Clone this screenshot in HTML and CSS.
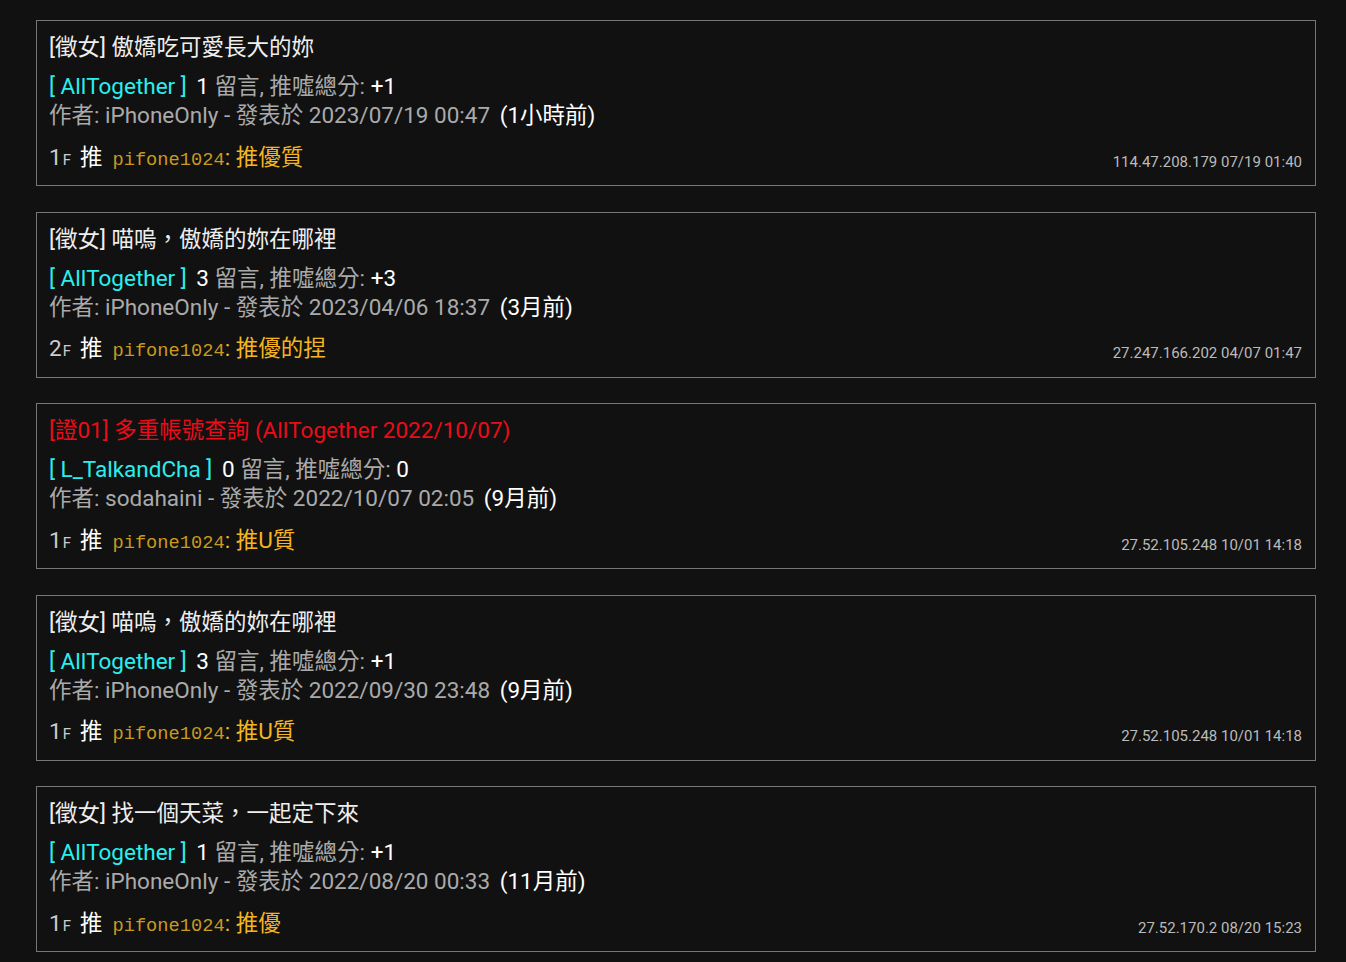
FILE: index.html
```html
<!DOCTYPE html>
<html lang="zh-Hant">
<head>
<meta charset="utf-8">
<title>Posts</title>
<link rel="stylesheet" href="styles.css">
</head>
<body>
<div class="list">
  <div class="card">
    <div class="title">[徵女] 傲嬌吃可愛長大的妳</div>
    <div class="stats"><span class="board">[ AllTogether ]</span> <span class="num first">1</span> 留言, 推噓總分: <span class="num">+1</span></div>
    <div class="author">作者: iPhoneOnly - 發表於 2023/07/19 00:47 <span class="ago">(1小時前)</span></div>
    <div class="push">
      <div class="push-left"><span class="floor">1<small>F</small></span><span class="tag">推</span><span class="user">pifone1024</span><span class="content">: 推優質</span></div>
      <div class="ip">114.47.208.179 07/19 01:40</div>
    </div>
  </div>
  <div class="card">
    <div class="title">[徵女] 喵嗚，傲嬌的妳在哪裡</div>
    <div class="stats"><span class="board">[ AllTogether ]</span> <span class="num first">3</span> 留言, 推噓總分: <span class="num">+3</span></div>
    <div class="author">作者: iPhoneOnly - 發表於 2023/04/06 18:37 <span class="ago">(3月前)</span></div>
    <div class="push">
      <div class="push-left"><span class="floor">2<small>F</small></span><span class="tag">推</span><span class="user">pifone1024</span><span class="content">: 推優的捏</span></div>
      <div class="ip">27.247.166.202 04/07 01:47</div>
    </div>
  </div>
  <div class="card">
    <div class="title red">[證01] 多重帳號查詢 (AllTogether 2022/10/07)</div>
    <div class="stats"><span class="board">[ L_TalkandCha ]</span> <span class="num first">0</span> 留言, 推噓總分: <span class="num">0</span></div>
    <div class="author">作者: sodahaini - 發表於 2022/10/07 02:05 <span class="ago">(9月前)</span></div>
    <div class="push">
      <div class="push-left"><span class="floor">1<small>F</small></span><span class="tag">推</span><span class="user">pifone1024</span><span class="content">: 推U質</span></div>
      <div class="ip">27.52.105.248 10/01 14:18</div>
    </div>
  </div>
  <div class="card">
    <div class="title">[徵女] 喵嗚，傲嬌的妳在哪裡</div>
    <div class="stats"><span class="board">[ AllTogether ]</span> <span class="num first">3</span> 留言, 推噓總分: <span class="num">+1</span></div>
    <div class="author">作者: iPhoneOnly - 發表於 2022/09/30 23:48 <span class="ago">(9月前)</span></div>
    <div class="push">
      <div class="push-left"><span class="floor">1<small>F</small></span><span class="tag">推</span><span class="user">pifone1024</span><span class="content">: 推U質</span></div>
      <div class="ip">27.52.105.248 10/01 14:18</div>
    </div>
  </div>
  <div class="card">
    <div class="title">[徵女] 找一個天菜，一起定下來</div>
    <div class="stats"><span class="board">[ AllTogether ]</span> <span class="num first">1</span> 留言, 推噓總分: <span class="num">+1</span></div>
    <div class="author">作者: iPhoneOnly - 發表於 2022/08/20 00:33 <span class="ago">(11月前)</span></div>
    <div class="push">
      <div class="push-left"><span class="floor">1<small>F</small></span><span class="tag">推</span><span class="user">pifone1024</span><span class="content">: 推優</span></div>
      <div class="ip">27.52.170.2 08/20 15:23</div>
    </div>
  </div>
</div>
</body>
</html>
```
FILE: styles.css
```css
html, body {
  margin: 0;
  padding: 0;
  background: #111111;
}
body {
  font-family: Roboto, "Noto Sans CJK TC", sans-serif;
  color: #eeeeee;
  overflow: hidden;
}
.list {
  width: 1280px;
  margin-left: 36px;
  padding-top: 20px;
  display: flex;
  flex-direction: column;
  gap: 25.5px;
}
.card {
  border: 1px solid #777777;
  padding: 11px 13px 12px 12px;
  font-size: 22.5px;
}
.title {
  height: 30px;
  line-height: 30px;
  color: #eeeeee;
  white-space: nowrap;
}
.title.red {
  color: #ea0c18;
}
.stats {
  margin-top: 10px;
  height: 29px;
  line-height: 29px;
  color: #aaaaaa;
  white-space: nowrap;
}
.board {
  color: #2aeeee;
}
.num {
  color: #ffffff;
}
.num.first {
  margin-left: 4px;
}
.author {
  height: 29px;
  line-height: 29px;
  color: #aaaaaa;
  white-space: nowrap;
}
.ago {
  color: #ffffff;
  margin-left: 4px;
}
.push {
  margin-top: 13px;
  height: 30px;
  display: flex;
  justify-content: space-between;
  align-items: center;
}
.push-left {
  white-space: nowrap;
  line-height: 30px;
}
.floor {
  color: #cccccc;
}
.floor small {
  font-size: 15px;
  margin-left: 1px;
}
.tag {
  color: #ffffff;
  margin-left: 9px;
  margin-right: 10px;
}
.user {
  font-family: "Liberation Mono", monospace;
  font-size: 18.7px;
  color: #c89a20;
}
.content {
  color: #f5b520;
}
.ip {
  font-size: 15px;
  line-height: 20px;
  margin-top: 7px;
  color: #bbbbbb;
  white-space: nowrap;
}
```
